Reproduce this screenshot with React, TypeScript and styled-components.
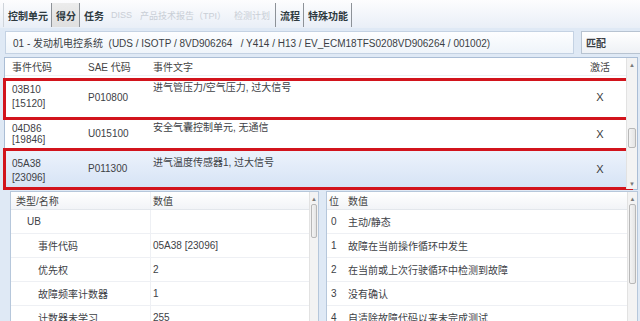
import React from 'react'
import styled, { createGlobalStyle } from 'styled-components'

const GlobalStyle = createGlobalStyle`
  html, body {
    margin: 0;
    padding: 0;
  }
  body {
    width: 640px;
    height: 321px;
    overflow: hidden;
    background: #dfe9f5;
    font-family: "Liberation Sans", "Noto Sans CJK SC", sans-serif;
    font-size: 10px;
    color: #3d4146;
  }
`

const TabBar = styled.div`
  height: 28px;
  box-sizing: border-box;
  display: flex;
  align-items: stretch;
  padding: 3px 0 1px 3px;
  background: linear-gradient(#fdfdfe, #e9eff7);
`

const Tab = styled.div<{ $active?: boolean; $first?: boolean; $plain?: boolean }>`
  display: flex;
  align-items: center;
  padding: 0 3px 0 4px;
  font-weight: bold;
  color: #2e3a3f;
  border-right: ${p => (p.$plain ? 'none' : '1px solid #8d9298')};
  border-left: ${p => (p.$first ? '1px solid #cfd4da' : 'none')};
  background: ${p => (p.$active ? 'linear-gradient(#ececec, #dfdfdf)' : 'transparent')};
`

const DisabledTabs = styled.div`
  display: flex;
  align-items: center;
  gap: 8px;
  padding: 0 5px 0 4px;
  font-size: 9px;
  color: #c9ced6;
  border-right: 1px solid #8d9298;
`

const InfoRow = styled.div`
  display: flex;
  gap: 7px;
  height: 23px;
  margin: 3px 0 0 5px;
`

const InfoBox = styled.div`
  flex: 1;
  display: flex;
  align-items: center;
  padding: 0 7px;
  background: linear-gradient(#fdfeff, #eff4fa);
  border: 1px solid #c4d2e3;
  white-space: pre;
  color: #3a3e44;
`

const SelectBox = styled.div`
  width: 54px;
  display: flex;
  align-items: center;
  padding-left: 4px;
  background: linear-gradient(#ffffff, #eef1f5);
  border: 1px solid #b7c3d1;
  border-right: none;
  font-weight: bold;
  color: #3a3e44;
`

const Table = styled.div`
  display: flex;
  height: 131px;
  margin: 3px 2px 0 4px;
  background: #ffffff;
  border: 1px solid #aabdd5;
`

const Rows = styled.div`
  flex: 1;
  display: flex;
  flex-direction: column;
`

const cols = '76px 65px 1fr 42px'

const HeadRow = styled.div`
  display: grid;
  grid-template-columns: ${cols};
  align-items: center;
  height: 17px;
  padding: 0 5px 0 7px;
  border-bottom: 1px solid #eef1f5;
  color: #444;
`

const ActiveHead = styled.span`
  text-align: center;
`

const EventRow = styled.div<{ $h: number; $selected?: boolean; $frame?: string }>`
  position: relative;
  display: grid;
  grid-template-columns: ${cols};
  height: ${p => p.$h}px;
  box-sizing: border-box;
  padding: 0 5px 0 7px;
  border-bottom: 1px solid #e4e8ee;
  background: ${p => (p.$selected ? 'linear-gradient(#edf3fc, #d6e3f5)' : '#ffffff')};
  &::after {
    content: '';
    display: ${p => (p.$frame ? 'block' : 'none')};
    position: absolute;
    inset: ${p => p.$frame || '0'};
    border: 3px solid #d2141c;
    pointer-events: none;
  }
`

const CodeCell = styled.div<{ $pt: number; $lh: number }>`
  padding-top: ${p => p.$pt}px;
  line-height: ${p => p.$lh}px;
`

const SaeCell = styled.div`
  align-self: center;
`

const TextCell = styled.div<{ $pt: number }>`
  padding-top: ${p => p.$pt}px;
  line-height: 14px;
`

const ActiveCell = styled.div`
  align-self: center;
  text-align: center;
  font-size: 11px;
  color: #3a3a3a;
`

const ScrollTrack = styled.div<{ $w: number }>`
  position: relative;
  width: ${p => p.$w}px;
  background: #f3f3f3;
  border-left: 1px solid #e2e2e2;
`

const Arrow = styled.div<{ $down?: boolean }>`
  position: absolute;
  left: 0;
  right: 0;
  ${p => (p.$down ? 'bottom: 2px;' : 'top: 4px;')}
  text-align: center;
  font-size: 6px;
  line-height: 6px;
  color: #7a7a7a;
`

const Thumb = styled.div<{ $top: number; $h: number }>`
  position: absolute;
  left: 1px;
  right: 1px;
  top: ${p => p.$top}px;
  height: ${p => p.$h}px;
  background: linear-gradient(90deg, #f4f4f4, #e4e4e4);
  border: 1px solid #b8b8b8;
  border-radius: 2px;
  box-sizing: border-box;
`

const Panels = styled.div`
  display: grid;
  grid-template-columns: 309px 312px;
  gap: 7px;
  margin: 1px 0 0 10px;
`

const Panel = styled.div`
  display: flex;
  height: 140px;
  background: #ffffff;
  border: 1px solid #b6c7db;
`

const PanelBody = styled.div`
  flex: 1;
  display: flex;
  flex-direction: column;
`

const PanelHead = styled.div<{ $cols: string }>`
  display: grid;
  grid-template-columns: ${p => p.$cols};
  align-items: center;
  height: 17px;
  flex-shrink: 0;
  background: linear-gradient(#ffffff, #f2f4f7);
  border-bottom: 1px solid #e3e7ec;
  color: #444;
`

const PanelRow = styled.div<{ $cols: string }>`
  display: grid;
  grid-template-columns: ${p => p.$cols};
  align-items: center;
  height: 24px;
  flex-shrink: 0;
  box-sizing: border-box;
  border-bottom: 1px solid #eef0f4;
`

const NameCell = styled.div<{ $indent: number }>`
  height: 100%;
  display: flex;
  align-items: center;
  padding-left: ${p => p.$indent}px;
  border-right: 1px solid #eef0f4;
`

const ValueCell = styled.div`
  padding-left: 2px;
`

const BitCell = styled.div<{ $pl: number }>`
  padding-left: ${p => p.$pl}px;
`

const events = [
  { code: '03B10', num: '[15120]', sae: 'P010800', text: '进气管压力/空气压力, 过大信号', h: 44, lh: 14, pt: 7, tpt: 5, frame: '2px -5px -1px -2px' },
  { code: '04D86', num: '[19846]', sae: 'U015100', text: '安全气囊控制单元, 无通信', h: 30, lh: 11, pt: 3, tpt: 1 },
  { code: '05A38', num: '[23096]', sae: 'P011300', text: '进气温度传感器1, 过大信号', h: 40, lh: 14, pt: 8, tpt: 7, frame: '-1px -7px -2px -2px', selected: true },
]

const details = [
  { name: 'UB', value: '', indent: 16 },
  { name: '事件代码', value: '05A38 [23096]', indent: 27 },
  { name: '优先权', value: '2', indent: 27 },
  { name: '故障频率计数器', value: '1', indent: 27 },
  { name: '计数器未学习', value: '255', indent: 27 },
]

const bits = [
  '主动/静态',
  '故障在当前操作循环中发生',
  '在当前或上次行驶循环中检测到故障',
  '没有确认',
  '自清除故障代码以来未完成测试',
]

const leftCols = '140px 1fr'
const rightCols = '21px 1fr'

const App: React.FC = () => {
  return (
    <>
      <GlobalStyle />
      <TabBar>
        <Tab $first>控制单元</Tab>
        <Tab $active>得分</Tab>
        <Tab $plain>任务</Tab>
        <DisabledTabs>
          <span>DISS</span>
          <span>产品技术报告（TPI）</span>
          <span>检测计划</span>
        </DisabledTabs>
        <Tab>流程</Tab>
        <Tab>特殊功能</Tab>
      </TabBar>

      <InfoRow>
        <InfoBox>01 - 发动机电控系统  (UDS / ISOTP / 8VD906264   / Y414 / H13 / EV_ECM18TFS0208VD906264 / 001002)</InfoBox>
        <SelectBox>匹配</SelectBox>
      </InfoRow>

      <Table>
        <Rows>
          <HeadRow>
            <span>事件代码</span>
            <span>SAE 代码</span>
            <span>事件文字</span>
            <ActiveHead>激活</ActiveHead>
          </HeadRow>
          {events.map(e => (
            <EventRow key={e.code} $h={e.h} $selected={e.selected} $frame={e.frame}>
              <CodeCell $pt={e.pt} $lh={e.lh}>
                {e.code}
                <br />
                {e.num}
              </CodeCell>
              <SaeCell>{e.sae}</SaeCell>
              <TextCell $pt={e.tpt}>{e.text}</TextCell>
              <ActiveCell>X</ActiveCell>
            </EventRow>
          ))}
        </Rows>
        <ScrollTrack $w={10}>
          <Arrow>▲</Arrow>
          <Thumb $top={70} $h={20} />
          <Arrow $down>▼</Arrow>
        </ScrollTrack>
      </Table>

      <Panels>
        <Panel>
          <PanelBody>
            <PanelHead $cols={leftCols}>
              <NameCell $indent={5}>类型/名称</NameCell>
              <ValueCell>数值</ValueCell>
            </PanelHead>
            {details.map(d => (
              <PanelRow key={d.name} $cols={leftCols}>
                <NameCell $indent={d.indent}>{d.name}</NameCell>
                <ValueCell>{d.value}</ValueCell>
              </PanelRow>
            ))}
          </PanelBody>
          <ScrollTrack $w={8}>
            <Arrow>▲</Arrow>
            <Thumb $top={12} $h={34} />
          </ScrollTrack>
        </Panel>

        <Panel>
          <PanelBody>
            <PanelHead $cols={rightCols}>
              <BitCell $pl={2}>位</BitCell>
              <span>数值</span>
            </PanelHead>
            {bits.map((b, i) => (
              <PanelRow key={b} $cols={rightCols}>
                <BitCell $pl={4}>{i}</BitCell>
                <span>{b}</span>
              </PanelRow>
            ))}
          </PanelBody>
          <ScrollTrack $w={9}>
            <Arrow>▲</Arrow>
            <Thumb $top={12} $h={80} />
          </ScrollTrack>
        </Panel>
      </Panels>
    </>
  )
}

export default App
